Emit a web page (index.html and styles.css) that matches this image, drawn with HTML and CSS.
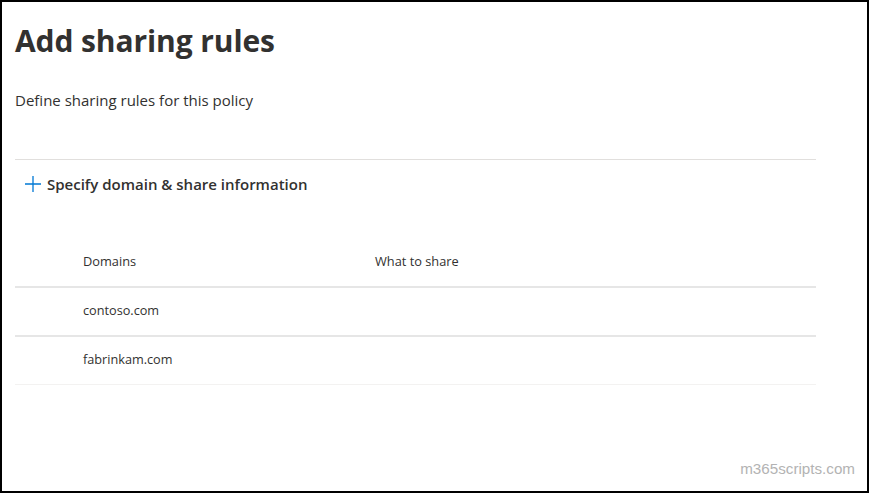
FILE: index.html
```html
<!DOCTYPE html>
<html>
    <head>
        <title>Add sharing rules</title>
        <link rel="stylesheet" href="styles.css">
    </head>
<body>
    <div class="page">
        <h1 class="title">Add sharing rules</h1>
        <p class="subtitle">Define sharing rules for this policy</p>

        <div class="panel">
            <button class="add-button">
                <svg class="plus" width="18" height="18" viewBox="0 0 18 18">
                    <path d="M9 1 V17 M1 9 H17" stroke="#0078d4" stroke-width="1.3" fill="none"/>
                </svg>
                <span>Specify domain &amp; share information</span>
            </button>

            <div class="table">
                <div class="row header">
                    <div class="cell domain">Domains</div>
                    <div class="cell share">What to share</div>
                </div>
                <div class="row">
                    <div class="cell domain">contoso.com</div>
                    <div class="cell share"></div>
                </div>
                <div class="row last">
                    <div class="cell domain">fabrinkam.com</div>
                    <div class="cell share"></div>
                </div>
            </div>
        </div>
    </div>
    <div class="watermark">m365scripts.com</div>
</body>
</html>
```

FILE: styles.css
```css
html, body {
    margin: 0;
    padding: 0;
}

body {
    font-family: "Open Sans", "Noto Sans", sans-serif;
    color: #323130;
    background: #fff;
    width: 869px;
    height: 493px;
    box-sizing: border-box;
    border: 2px solid #000;
    position: relative;
    overflow: hidden;
}

.page {
    padding: 0 51px 0 13px;
}

.title {
    font-size: 30px;
    font-weight: 700;
    margin: 17px 0 0 0;
    line-height: 44px;
    letter-spacing: -0.1px;
}

.subtitle {
    font-size: 15px;
    margin: 27px 0 0 0;
    line-height: 20px;
}

.panel {
    margin-top: 49px;
    border-top: 1px solid #e1dfdd;
}

.add-button {
    display: flex;
    align-items: center;
    gap: 5px;
    background: none;
    border: none;
    padding: 0 0 0 9px;
    margin-top: 14px;
    font-family: inherit;
    font-size: 15px;
    font-weight: 600;
    color: #323130;
    cursor: pointer;
}

.plus {
    display: block;
}

.table {
    margin-top: 44px;
}

.row {
    display: flex;
    box-sizing: border-box;
    height: 49px;
    padding-bottom: 4px;
    align-items: center;
    border-bottom: 2px solid #e6e6e6;
    font-size: 12.7px;
    color: #323130;
}

.row.header {
    height: 50px;
    padding-bottom: 2px;
    font-size: 12.8px;
}

.row.last {
    height: 48px;
    border-bottom: 1px solid #f3f2f1;
}

.cell.domain {
    width: 292px;
    padding-left: 68px;
}

.watermark {
    position: absolute;
    right: 12px;
    bottom: 14px;
    font-family: "Liberation Sans", Arial, sans-serif;
    font-size: 15.2px;
    color: #b3b3b3;
}
```
